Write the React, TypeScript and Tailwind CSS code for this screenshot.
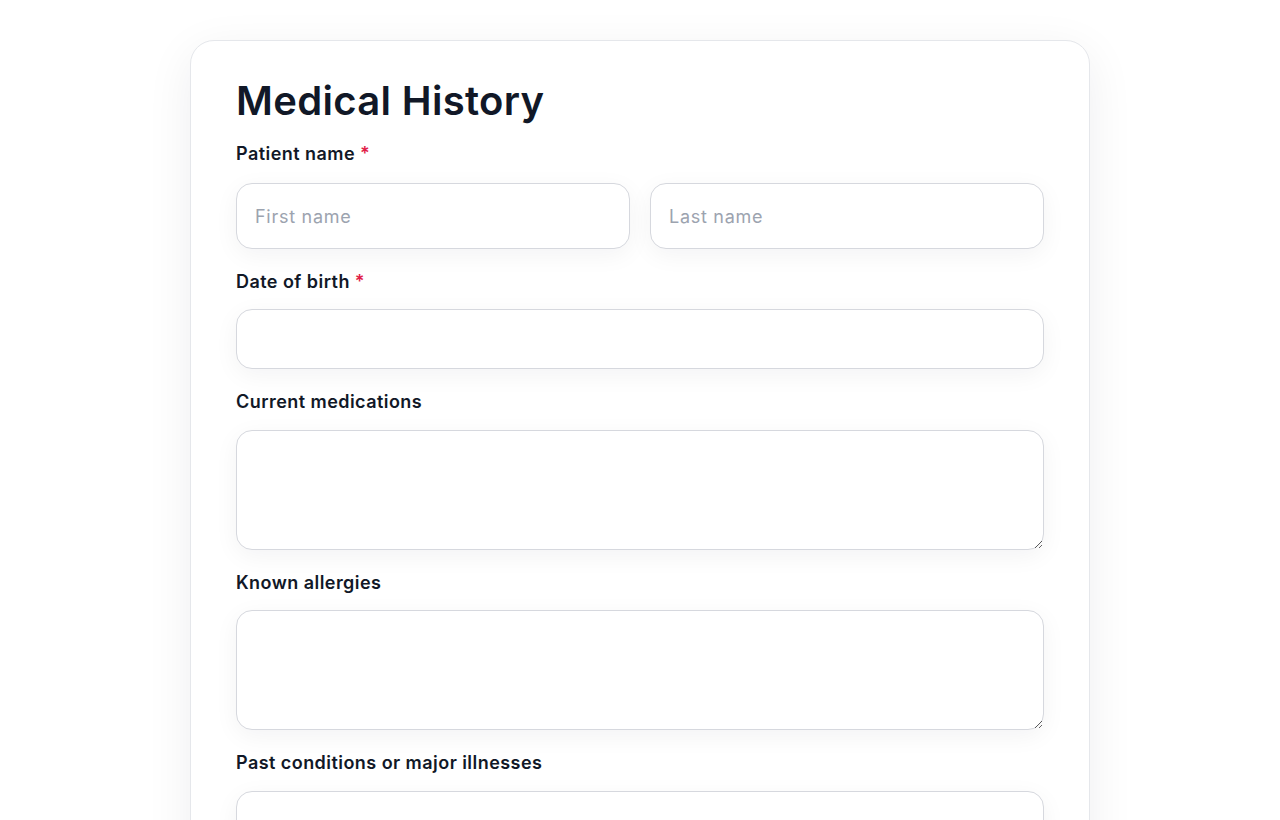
import React from 'react';

const font = { fontFamily: 'Inter, "Noto Sans", sans-serif' };

const inputCls =
    'w-full rounded-2xl border border-[#d6d8de] bg-white px-[18px] text-[18px] tracking-[0.04em] text-gray-900 placeholder:text-[#9ca3af] outline-none shadow-[0_6px_24px_rgba(17,24,39,0.05)]';

const Label: React.FC<{ text: string; required?: boolean; className?: string }> = ({ text, required, className }) => (
    <label className={`block text-[18px] leading-[28px] font-semibold tracking-[0.025em] text-[#111827] ${className ?? ''}`}>
        {text}
        {required && <span className="text-[#e11d48] ml-[5px]">*</span>}
    </label>
);

export default function App() {
    return (
        <div className="min-h-[820px] bg-white pt-10 overflow-hidden" style={font}>
            <div className="mx-auto w-[900px] rounded-[24px] border border-[#e5e7eb] bg-white px-[45px] pt-[36px] pb-12 shadow-[0_12px_48px_rgba(17,24,39,0.07)]">
                <h1 className="text-[40px] leading-[48px] font-semibold text-[#111827] tracking-[0.008em] mb-[15px]">
                    Medical History
                </h1>

                <Label text="Patient name" required className="mb-[15px]" />
                <div className="grid grid-cols-2 gap-5">
                    <input className={`${inputCls} h-[66px]`} placeholder="First name" />
                    <input className={`${inputCls} h-[66px]`} placeholder="Last name" />
                </div>

                <Label text="Date of birth" required className="mt-[19px] mb-[13px]" />
                <input className={`${inputCls} h-[60px]`} />

                <Label text="Current medications" className="mt-[19px] mb-[14px]" />
                <textarea className={`${inputCls} h-[120px] py-3 resize-y block`} />

                <Label text="Known allergies" className="mt-[19px] mb-[13px]" />
                <textarea className={`${inputCls} h-[120px] py-3 resize-y block`} />

                <Label text="Past conditions or major illnesses" className="mt-[19px] mb-[14px]" />
                <textarea className={`${inputCls} h-[120px] py-3 resize-y block`} />
            </div>
        </div>
    );
}
